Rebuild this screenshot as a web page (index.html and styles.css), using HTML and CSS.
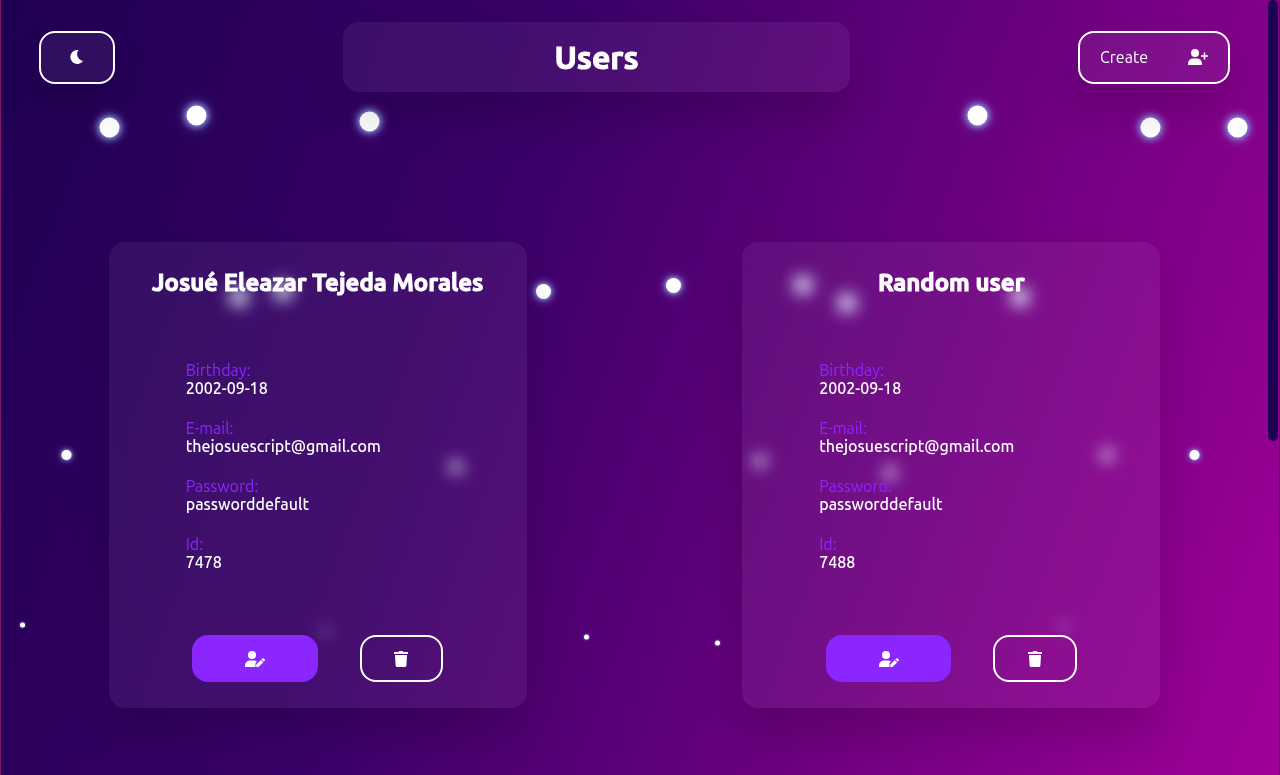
FILE: index.html
```html
<!DOCTYPE html>
<html lang="en">
<head>
<meta charset="utf-8">
<meta name="viewport" content="width=device-width, initial-scale=1">
<title>Users</title>
<link rel="stylesheet" href="styles.css">
</head>
<body>
<svg class="particles" aria-hidden="true">
  <g class="glow">
    <circle cx="109.500" cy="127.500" r="10"/><circle cx="196.500" cy="115.500" r="10"/><circle cx="369.500" cy="121.500" r="10"/>
    <circle cx="977.500" cy="115.500" r="10"/><circle cx="1150.500" cy="127.500" r="10"/><circle cx="1237.500" cy="127.500" r="10"/>
  </g>
  <g class="glow glow-mid">
    <circle cx="239" cy="297" r="7.500"/><circle cx="283" cy="291" r="7.500"/><circle cx="543.500" cy="291.500" r="7.500"/><circle cx="673.500" cy="285.500" r="7.500"/>
    <circle cx="803" cy="285" r="7.500"/><circle cx="847" cy="303" r="7.500"/><circle cx="1020" cy="297" r="7.500"/>
  </g>
  <g class="glow glow-small">
    <circle cx="66.500" cy="455" r="5"/><circle cx="456" cy="467" r="5"/><circle cx="760" cy="461" r="5"/>
    <circle cx="890" cy="473" r="5"/><circle cx="1107" cy="455" r="5"/><circle cx="1194.500" cy="455" r="5"/>
  </g>
  <g class="glow glow-tiny">
    <circle cx="22.500" cy="625" r="2.500"/><circle cx="326" cy="631" r="2.500"/><circle cx="586.500" cy="637" r="2.500"/>
    <circle cx="717.500" cy="643" r="2.500"/><circle cx="1064" cy="625" r="2.500"/>
  </g>
</svg>

<div class="page">
  <header class="header">
    <button class="btn glass theme" type="button" aria-label="Toggle theme">
      <svg class="icon" viewBox="0 0 20 20" aria-hidden="true"><path d="M11.500 3A7 7 0 1 0 16 14A7 7 0 0 1 11.500 3Z"/></svg>
    </button>
    <h1 class="title glass">Users</h1>
    <button class="btn glass create" type="button">
      <span>Create</span>
      <svg class="icon" viewBox="0 0 20 20" aria-hidden="true"><circle cx="7" cy="6" r="4"/><path d="M0 18v-1.500A5 5 0 0 1 5 11.500h4a5 5 0 0 1 5 5V18zM15.700 5.500h1.600V8.200H20v1.600h-2.700v2.700h-1.600V9.800H13V8.200h2.700z"/></svg>
    </button>
  </header>

  <main class="users">
    <article class="card glass">
      <h2 class="name">Josué Eleazar Tejeda Morales</h2>
      <dl class="fields">
        <div><dt>Birthday:</dt><dd>2002-09-18</dd></div>
        <div><dt>E-mail:</dt><dd>thejosuescript@gmail.com</dd></div>
        <div><dt>Password:</dt><dd>passworddefault</dd></div>
        <div><dt>Id:</dt><dd>7478</dd></div>
      </dl>
      <div class="actions">
        <button class="btn edit" type="button" aria-label="Edit user">
          <svg class="icon" viewBox="0 0 20 20" aria-hidden="true"><circle cx="7" cy="6" r="4"/><path d="M0 18v-1.500A5 5 0 0 1 5 11.500h4q1.600 0 3 .9L10.500 14V18zM11.200 18v-2.300l4.600-4.600 2.300 2.300L13.500 18zM16.500 10.400l.9-.9q.8-.7 1.600 0l.6.700q.8.800 0 1.600l-.9.900z"/></svg>
        </button>
        <button class="btn delete" type="button" aria-label="Delete user">
          <svg class="icon" viewBox="0 0 20 20" aria-hidden="true"><path d="M3 3h4.500l.8-1h3.400l.8 1H17v2H3zM4 6h12l-.6 10.500A1.600 1.600 0 0 1 13.800 18H6.200a1.600 1.600 0 0 1-1.600-1.500z"/></svg>
        </button>
      </div>
    </article>

    <article class="card glass">
      <h2 class="name">Random user</h2>
      <dl class="fields">
        <div><dt>Birthday:</dt><dd>2002-09-18</dd></div>
        <div><dt>E-mail:</dt><dd>thejosuescript@gmail.com</dd></div>
        <div><dt>Password:</dt><dd>passworddefault</dd></div>
        <div><dt>Id:</dt><dd>7488</dd></div>
      </dl>
      <div class="actions">
        <button class="btn edit" type="button" aria-label="Edit user">
          <svg class="icon" viewBox="0 0 20 20" aria-hidden="true"><circle cx="7" cy="6" r="4"/><path d="M0 18v-1.500A5 5 0 0 1 5 11.500h4q1.600 0 3 .9L10.500 14V18zM11.200 18v-2.300l4.600-4.600 2.300 2.300L13.500 18zM16.500 10.400l.9-.9q.8-.7 1.600 0l.6.700q.8.800 0 1.600l-.9.900z"/></svg>
        </button>
        <button class="btn delete" type="button" aria-label="Delete user">
          <svg class="icon" viewBox="0 0 20 20" aria-hidden="true"><path d="M3 3h4.500l.8-1h3.400l.8 1H17v2H3zM4 6h12l-.6 10.500A1.600 1.600 0 0 1 13.800 18H6.200a1.600 1.600 0 0 1-1.600-1.500z"/></svg>
        </button>
      </div>
    </article>
  </main>
</div>
<div class="scroll-thumb"></div>
</body>
</html>
```

FILE: styles.css
```css
* {
  box-sizing: border-box;
  margin: 0;
}

body {
  min-height: 100vh;
  border-left: 1px solid #7c1a68;
  border-right: 1px solid #4a1050;
  background: linear-gradient(110deg, #1f0053, #3a0068 37%, #a00097);
  color: #fff;
  font-family: Ubuntu, "Noto Sans", sans-serif;
  font-size: 16px;
  line-height: 18px;
}

.particles {
  position: absolute;
  top: 0;
  left: 0;
  width: 100%;
  height: 100%;
}

.glow {
  fill: #fff;
  filter: drop-shadow(0 0 3px #8ea0f0) drop-shadow(0 0 5px #8ea0f0);
}

.glow-mid {
  filter: drop-shadow(0 0 2px #8ea0f0) drop-shadow(0 0 4px #8ea0f0);
}

.glow-small {
  filter: drop-shadow(0 0 1px #8ea0f0) drop-shadow(0 0 3px #8ea0f0);
}

.glow-tiny {
  filter: drop-shadow(0 0 1px #8ea0f0);
}

.page {
  position: relative;
  padding-right: 11px;
}

.glass {
  background: rgba(255, 255, 255, 0.06);
  box-shadow: 0 25px 45px rgba(0, 0, 0, 0.15);
  backdrop-filter: blur(8px);
}

.header {
  display: flex;
  justify-content: space-between;
  align-items: center;
  padding-top: 22px;
}

.title {
  width: 40%;
  border-radius: 16px;
  font-size: 32px;
  font-weight: 700;
  line-height: 70px;
  text-align: center;
  -webkit-text-stroke: 1px #fff;
}

.btn {
  display: flex;
  justify-content: center;
  align-items: center;
  height: 47px;
  border: 2px solid #fff;
  border-radius: 16px;
  color: inherit;
  font: inherit;
  cursor: pointer;
}

.theme {
  width: 6%;
  height: 53px;
  margin-left: 38px;
}

.create {
  justify-content: space-between;
  width: 12%;
  height: 53px;
  margin-right: 38px;
  padding: 0 20px;
}

.icon {
  flex: none;
  width: 20px;
  height: 20px;
  fill: currentColor;
}

.users {
  display: grid;
  grid-template-columns: 1fr 1fr;
  justify-items: center;
  padding-top: 150px;
}

.card {
  width: 66%;
  padding: 25px 0 26px;
  border-radius: 16px;
}

.name {
  font-size: 24px;
  font-weight: 700;
  line-height: 32px;
  text-align: center;
  -webkit-text-stroke: 1px #fff;
}

.fields {
  display: grid;
  gap: 22px;
  padding: 62px 77px 64px;
}

.fields dt {
  color: #8b26ff;
}

.fields dd {
  font-weight: 500;
}

.actions {
  display: flex;
  justify-content: center;
  gap: 10%;
}

.edit {
  width: 30%;
  border-color: #8b26ff;
  background: #8b26ff;
}

.delete {
  width: 20%;
  background: transparent;
}

.scroll-thumb {
  position: fixed;
  top: 0;
  right: 2px;
  width: 10px;
  height: 441px;
  border-radius: 5px;
  background: #1f0053;
}
```
